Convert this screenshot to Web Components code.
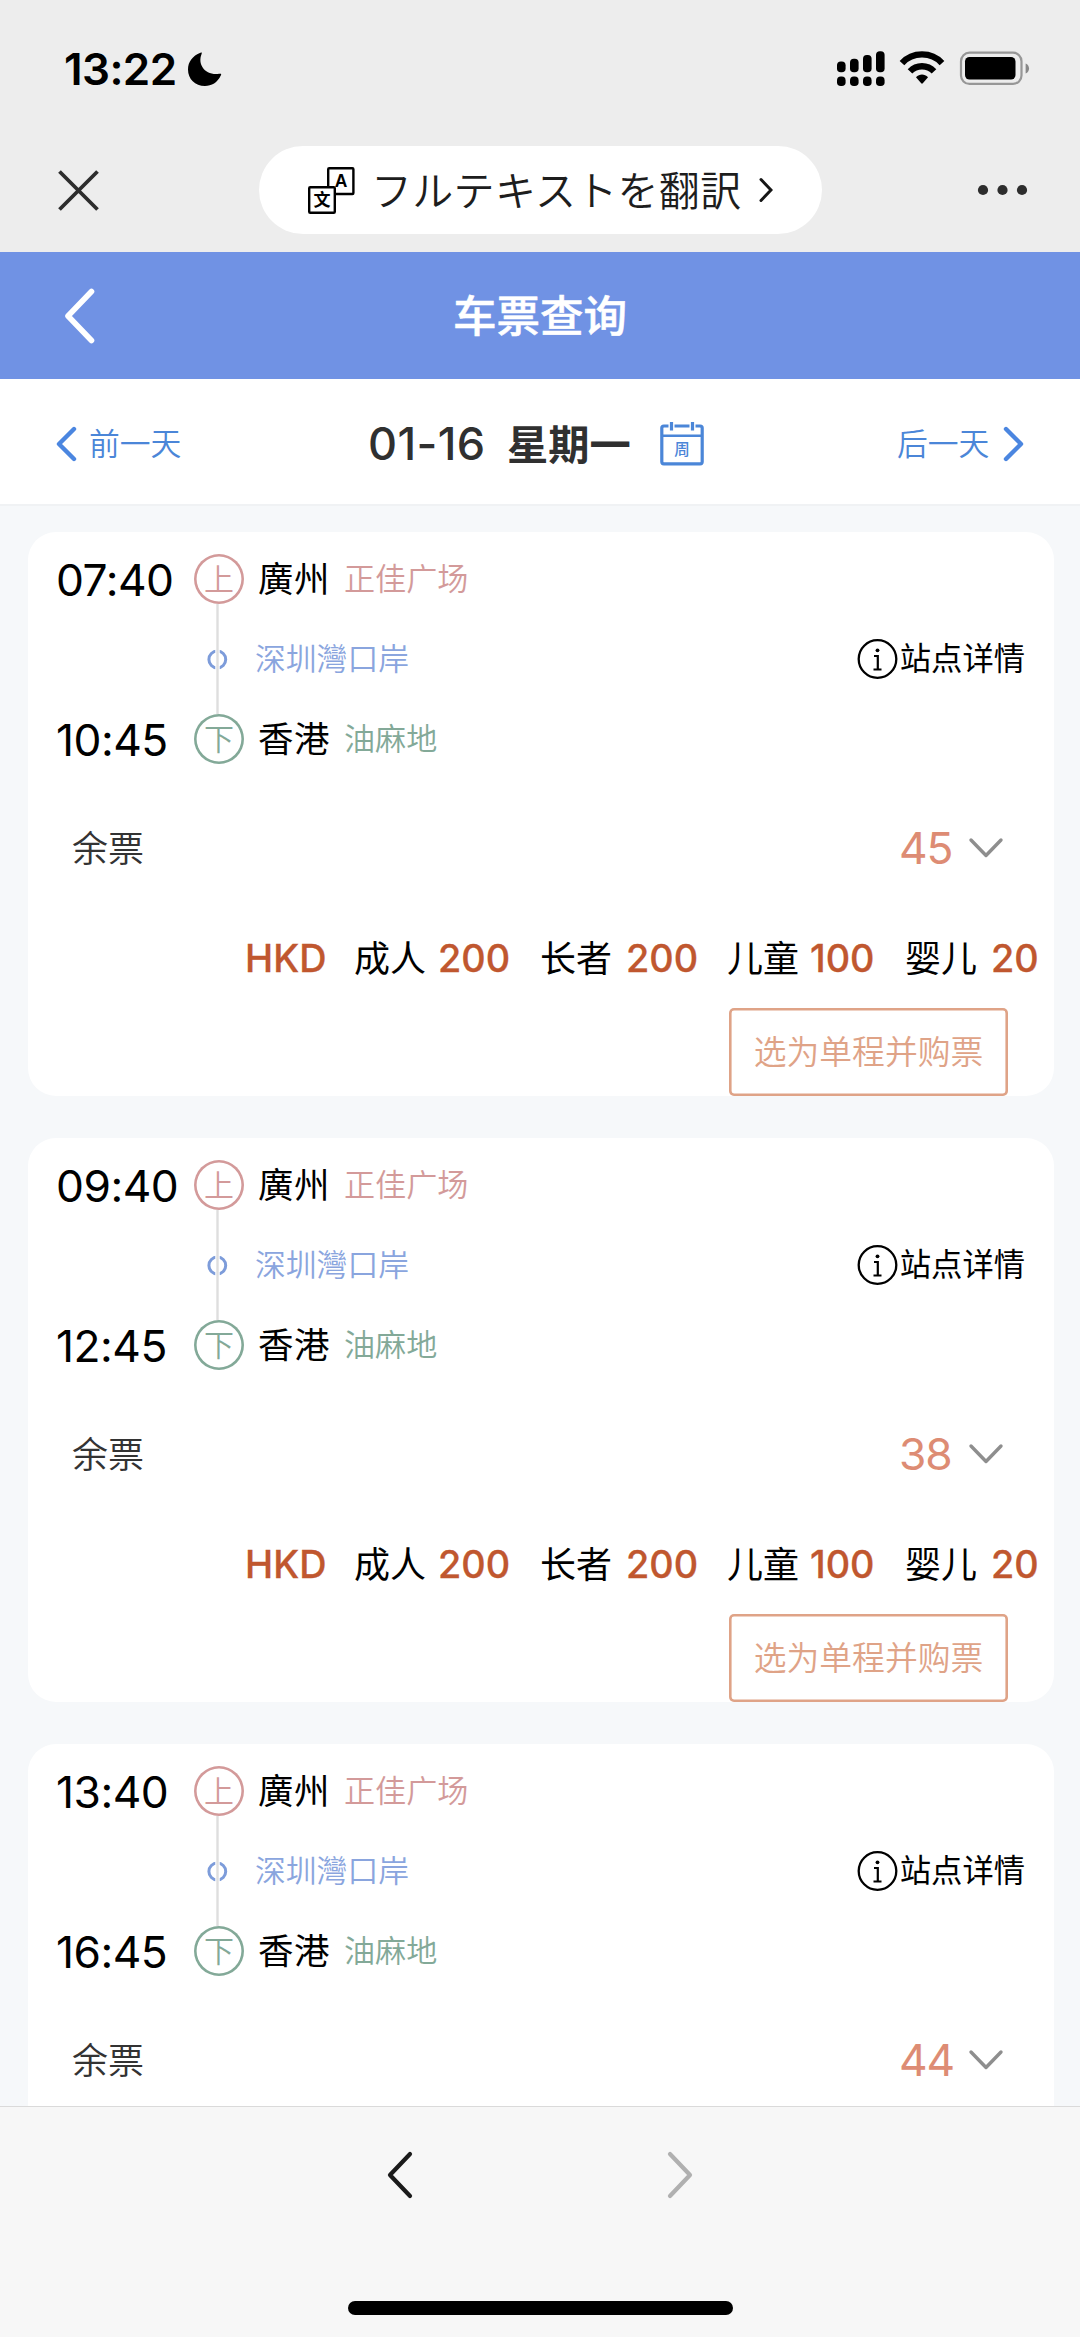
<!DOCTYPE html>
<html lang="zh-CN">
<head>
<meta charset="utf-8">
<title>车票查询</title>
<style>
html,body{margin:0;padding:0}
body{width:1080px;height:2337px;overflow:hidden;background:#f6f8fa;font-family:Inter,"Noto Sans CJK SC",sans-serif;color:#000}
ticket-app{height:2337px}
</style>
</head>
<body>
<ticket-app></ticket-app>
<script>
const define = (name, html, setup) => {
  const tpl = document.createElement('template');
  tpl.innerHTML = '<style>*{box-sizing:border-box}svg{display:block;flex:none}:host{display:block;box-sizing:border-box;white-space:nowrap}</style>' + html;
  customElements.define(name, class extends HTMLElement {
    constructor() {
      super();
      this.attachShadow({ mode: 'open' }).appendChild(tpl.content.cloneNode(true));
    }
    connectedCallback() {
      if (setup) setup(this, this.shadowRoot);
    }
  });
};

define('status-bar', `
<style>
:host{height:137px;padding:0 50px 0 64px;display:flex;align-items:center;justify-content:space-between}
.l,.r{display:flex;align-items:center}
.t{font-size:44px;font-weight:600;width:124px;letter-spacing:-.6px;line-height:60px}
</style>
<div class="l"><span class="t">13:22</span>
<svg width="34" height="34" viewBox="0 0 34 34"><path d="M12.5.8C14 .2 14 .8 13.5 2.200C9.500 12 16.500 23.500 31 21.800C33.500 21.400 33.500 22 32.800 23.500C29.500 30.500 23.500 34 17 34C7 34 0 27 0 17.500C0 10 4.500 3.800 12.500.8Z"/></svg></div>
<div class="r">
<svg width="193" height="36" viewBox="837 51 193 36">
<g><rect x="837" y="61.500" width="8.600" height="10.700" rx="3.800"/><rect x="850" y="58.700" width="8.600" height="13.500" rx="3.800"/><rect x="863" y="55" width="8.600" height="17.200" rx="3.800"/><rect x="876" y="51.300" width="8.600" height="20.900" rx="3.800"/>
<rect x="837" y="76.600" width="8.600" height="9.400" rx="3.800"/><rect x="850" y="76.600" width="8.600" height="9.400" rx="3.800"/><rect x="863" y="76.600" width="8.600" height="9.400" rx="3.800"/><rect x="876" y="76.600" width="8.600" height="9.400" rx="3.800"/></g>
<g fill="none" stroke="#000" stroke-width="6.300"><path d="M902 63.100C912.500 51.500 931.500 51.500 942 63.100"/><path d="M910 71.400C916.500 64.500 927.500 64.500 934 71.400"/></g>
<path d="M916 77.200C919.500 73.700 924.500 73.700 928 77.200L922.800 83.300Q922 84 921.200 83.300Z"/>
<rect x="961" y="52.700" width="60.500" height="31.200" rx="8.500" fill="none" stroke="#979797" stroke-width="2.200"/>
<rect x="965" y="57" width="50.500" height="22.600" rx="4.500"/>
<path d="M1025.600 63.500C1030.200 65 1030.200 72 1025.600 73.400Z" fill="#888"/>
</svg></div>`);

define('browser-bar', `
<style>
:host{height:115px;padding:9px 51px 18px 58px;display:grid;grid-template-columns:201px 563px 1fr;align-items:center}
.pill{height:88px;border-radius:44px;background:#fff;display:flex;align-items:center;padding-left:49px;color:#1d1d1d}
.txt{font-family:"Noto Sans CJK JP",sans-serif;font-size:41px;letter-spacing:.3px;line-height:56px;width:388px;margin-left:16px;padding-bottom:4px;font-weight:350}
.more{justify-self:end}
</style>
<svg width="41" height="41" viewBox="0 0 41 41"><path d="M1.500 1.500l38 38M39.500 1.500l-38 38" stroke="#2d2d2d" stroke-width="3.800"/></svg>
<div class="pill">
<svg width="47" height="47" viewBox="0 0 47 47"><g fill="#fff" stroke="#000" stroke-width="2.400"><rect x="20.200" y="1.200" width="25.200" height="25.800" rx="1"/><rect x="1.200" y="20.200" width="25.600" height="25.600" rx="1"/></g>
<text x="33" y="20" text-anchor="middle" font-family="Liberation Sans" font-weight="700" font-size="17.500">A</text><text x="14" y="39.300" text-anchor="middle" font-family="Noto Sans CJK SC" font-weight="700" font-size="17">文</text></svg>
<span class="txt" lang="ja">フルテキストを翻訳</span>
<svg width="14" height="26" viewBox="0 0 14 26"><path d="M2 2.500L12 13L2 23.500" fill="none" stroke="#161616" stroke-width="3" stroke-linecap="round"/></svg>
</div>
<svg class="more" width="52" height="12" viewBox="977 0 52 12" fill="#2d2d2d"><circle cx="983" cy="6" r="5.100"/><circle cx="1002.500" cy="6" r="5.100"/><circle cx="1022" cy="6" r="5.100"/></svg>`);

define('title-bar', `
<style>
:host{height:127px;background:#7092e4;color:#fff;display:grid;grid-template-columns:1fr auto 1fr;align-items:center;padding:0 64px}
h1{margin:0;font:500 43.500px/60px "Noto Sans CJK SC",sans-serif;padding-bottom:4px;-webkit-text-stroke:.5px #fff}
</style>
<svg width="32" height="56" viewBox="0 0 32 56"><path d="M27.500 3.500L4 28L27.500 52.500" fill="none" stroke="#fff" stroke-width="5.600" stroke-linecap="round" stroke-linejoin="round"/></svg>
<h1><slot></slot></h1>`);

define('date-bar', `
<style>
:host{height:127px;background:#fff;border-bottom:2px solid #f0f2f4;padding:4px 56px 0 56px;display:flex;align-items:center}
.nav{font:350 30.800px/44px "Noto Sans CJK SC",sans-serif;color:#4b86d8;padding-bottom:3px}
.prev{width:279px;margin-left:12px}
.d{font-size:45px;font-weight:500;color:#303030;width:139px;letter-spacing:.4px}
.w{font:700 41.300px/56px "Noto Sans CJK SC",sans-serif;color:#303030;width:153px;padding-bottom:4px}
.next{margin-left:192px;width:106px}
</style>
<svg width="21" height="36" viewBox="0 0 21 36"><path d="M18 3L3 18L18 33" fill="none" stroke="#4b86e0" stroke-width="4.400" stroke-linecap="round" stroke-linejoin="round"/></svg>
<span class="nav prev">前一天</span><span class="d">01-16</span><span class="w">星期一</span>
<svg width="45" height="45" viewBox="0 0 45 45" fill="none" stroke="#4b86d8"><rect x="1.800" y="5" width="40.400" height="37.800" rx="2" stroke-width="3.200"/><path d="M2 14.800H42" stroke-width="2.500"/><path d="M11.500 1V9.500M32.500 1V9.500" stroke="#fff" stroke-width="6"/><path d="M11.500 1V9.500M32.500 1V9.500" stroke-width="3.200"/><text x="22" y="34" text-anchor="middle" font-family="Noto Sans CJK SC" font-size="15.500" font-weight="500" stroke="none" fill="#4b86d8">周</text></svg>
<span class="nav next">后一天</span>
<svg width="21" height="36" viewBox="0 0 21 36"><path d="M3 3L18 18L3 33" fill="none" stroke="#4b86e0" stroke-width="4.400" stroke-linecap="round" stroke-linejoin="round"/></svg>`);

define('stop-badge', `
<style>
:host{width:50px;height:50px;box-shadow:inset 0 0 0 2.600px currentColor;border-radius:50%;display:flex;align-items:center;justify-content:center;font:350 30px/40px "Noto Sans CJK SC",sans-serif;flex:none;padding-bottom:4px}
</style><slot></slot>`);

define('stop-row', `
<style>
:host{height:54px;display:flex;align-items:center}
.time{width:138px;font-size:44.300px;line-height:50px;letter-spacing:-.5px;padding-top:2px}
.city{font:400 35.500px/50px "Noto Sans CJK TC",sans-serif;width:86px;margin-left:14px;letter-spacing:.5px;padding-bottom:4px}
.place{font:350 31.100px/44px "Noto Sans CJK SC",sans-serif;padding-bottom:5px}
.place,stop-badge{color:var(--tone)}
</style>
<span class="time"></span><stop-badge><slot name="badge"></slot></stop-badge>
<span class="city"><slot name="city"></slot></span><span class="place"><slot></slot></span>`);

define('via-row', `
<style>
:host{height:106px;display:flex;align-items:center;padding:0 29px 0 138px}
.rail{margin:-2px 0}
.via{font:350 30.800px/44px "Noto Sans CJK TC",sans-serif;color:#8aa5de;margin-left:15px;padding-bottom:5px;flex:1}
.info{display:flex;align-items:center;font:400 31.300px/44px "Noto Sans CJK SC",sans-serif}
.info span{padding-bottom:5px;margin-left:2px}
</style>
<svg class="rail" width="46" height="110" viewBox="0 0 46 110"><circle cx="23.300" cy="55.500" r="8.400" fill="#fff" stroke="#7d9cda" stroke-width="3"/><path d="M23.500 43V68" stroke="#fff" stroke-width="4.500"/><path d="M23.500 0V110" stroke="#dedede" stroke-width="2.400"/></svg>
<span class="via"><slot></slot></span>
<div class="info"><svg width="41" height="42" viewBox="0 0 41 42"><circle cx="20.500" cy="21" r="18.800" fill="none" stroke="#000" stroke-width="2.300"/><circle cx="20.500" cy="12.300" r="1.900"/><path d="M17 18H20.800V31.500M16.500 31.500H24.500" fill="none" stroke="#000" stroke-width="2.200"/></svg><span>站点详情</span></div>`);

define('price-line', `
<style>
:host{height:60px;display:flex;align-items:center;padding-left:189px}
b{font-size:37.800px;font-weight:500;color:#c0572f;-webkit-text-stroke:.3px #c0572f;width:var(--w)}
span{font:400 36px/50px "Noto Sans CJK SC",sans-serif;padding-bottom:4px;width:var(--w)}
</style>
<b style="--w:109px">HKD</b>
<span style="--w:84px">成人</span><b style="--w:102px">200</b>
<span style="--w:86px">长者</span><b style="--w:101px">200</b>
<span style="--w:83px">儿童</span><b style="--w:95px">100</b>
<span style="--w:86px">婴儿</span><b style="--w:49px">20</b>`);

define('buy-button', `
<style>
:host{margin:20px 46px 0 auto;width:279px;height:88px;box-shadow:inset 0 0 0 2.600px #dfa387;border-radius:5px;color:#dfa387;font:350 32.800px/44px "Noto Sans CJK SC",sans-serif;display:flex;align-items:center;justify-content:center;padding-bottom:4px}
</style><slot></slot>`);

define('trip-card', `
<style>
:host{width:1026px;height:564px;flex:none;background:#fff;border-radius:28px;padding:20px 0 0 28px;display:flex;flex-direction:column}
:host([summary]){height:auto;flex:1;border-radius:28px 28px 0 0}
.up{--tone:#d39a9a}.down{--tone:#83a998}
.left{height:162px;display:flex;align-items:center;justify-content:space-between;padding:1px 50px 0 16px}
.left .k{font:350 36px/50px "Noto Sans CJK SC",sans-serif;color:#333;padding-bottom:4px}
.left div{display:flex;align-items:center}
.n{font-size:44.300px;color:#dd8c74;width:69px;letter-spacing:-1px}
</style>
<stop-row class="up"><span slot="badge">上</span><span slot="city">廣州</span>正佳广场</stop-row>
<via-row>深圳灣口岸</via-row>
<stop-row class="down"><span slot="badge">下</span><span slot="city">香港</span>油麻地</stop-row>
<div class="left"><span class="k">余票</span><div><span class="n"></span><svg width="36" height="22" viewBox="0 0 36 22"><path d="M3 3L18 18.500L33 3" fill="none" stroke="#8e8e8e" stroke-width="3.400" stroke-linecap="round" stroke-linejoin="round"/></svg></div></div>
<price-line></price-line>
<buy-button>选为单程并购票</buy-button>`,
(el, root) => {
  root.querySelector('.up').shadowRoot.querySelector('.time').textContent = el.getAttribute('depart');
  root.querySelector('.down').shadowRoot.querySelector('.time').textContent = el.getAttribute('arrive');
  root.querySelector('.n').textContent = el.getAttribute('seats');
  if (el.hasAttribute('summary')) {
    root.querySelector('price-line').remove();
    root.querySelector('buy-button').remove();
  }
});

define('bottom-bar', `
<style>
:host{height:231px;border-top:1px solid #dadada;background:#f7f7f7;display:flex;flex-direction:column;align-items:center;padding:43px 0 22px;justify-content:space-between}
.n{display:flex;justify-content:space-between;width:308px}
.home{width:385px;height:14px;border-radius:7px;background:#000}
svg{fill:none;stroke-width:4.200;stroke-linecap:round;stroke-linejoin:round}
</style>
<div class="n"><svg width="28" height="50" viewBox="0 0 28 50" stroke="#1b1b1b"><path d="M24 4L4 25L24 46"/></svg>
<svg width="28" height="50" viewBox="0 0 28 50" stroke="#b0b0b0"><path d="M4 4L24 25L4 46"/></svg></div>
<div class="home"></div>`);

define('ticket-app', `
<style>
:host{display:flex;flex-direction:column}
header{background:#ededed;flex:none}
title-bar,date-bar,bottom-bar{flex:none}
main{flex:1;min-height:0;padding:26px 0 0 28px;display:flex;flex-direction:column;gap:42px}
</style>
<header><status-bar></status-bar><browser-bar></browser-bar></header>
<title-bar>车票查询</title-bar>
<date-bar></date-bar>
<main>
<trip-card depart="07:40" arrive="10:45" seats="45"></trip-card>
<trip-card depart="09:40" arrive="12:45" seats="38"></trip-card>
<trip-card depart="13:40" arrive="16:45" seats="44" summary></trip-card>
</main>
<bottom-bar></bottom-bar>`);
</script>
</body>
</html>
